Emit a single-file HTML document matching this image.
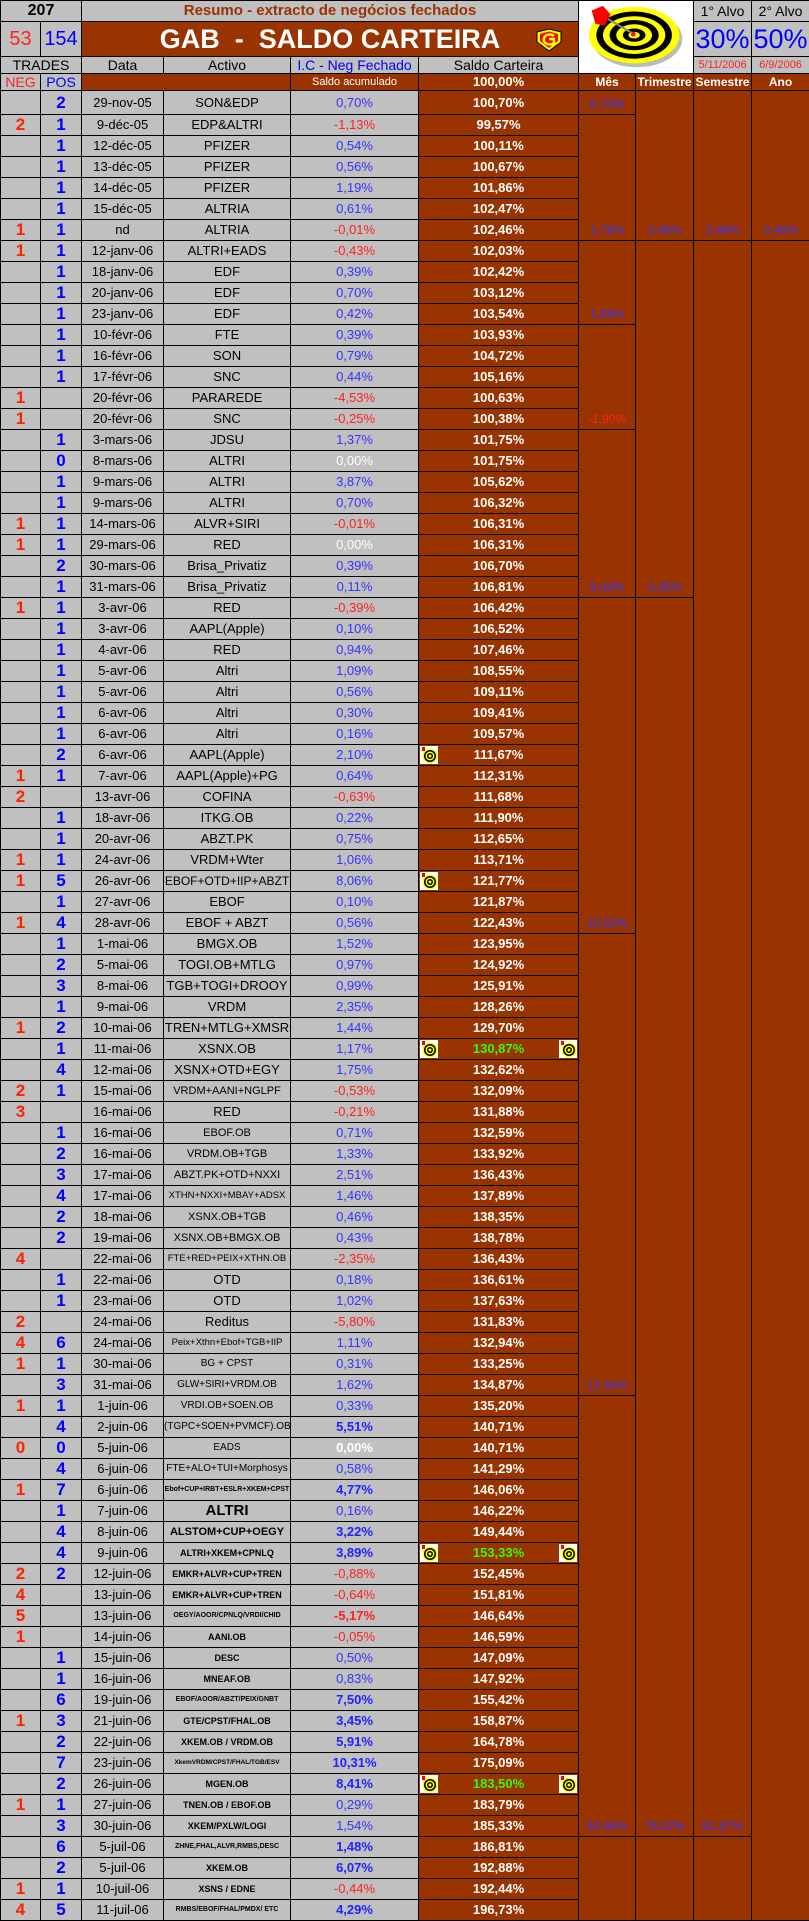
<!DOCTYPE html>
<html><head><meta charset="utf-8">
<style>
html,body{margin:0;padding:0;background:#c0c0c0;}
body{width:809px;height:1919px;overflow:hidden;}
table{border-collapse:collapse;table-layout:fixed;width:809px;font-family:"Liberation Sans",Arial,sans-serif;}
td{border:1px solid #000;padding:0;text-align:center;vertical-align:middle;font-size:13px;background:#c0c0c0;color:#000;white-space:nowrap;overflow:hidden;line-height:14px;}
tr.d td{height:20px;}
.n{color:#ff2200;font-weight:bold;font-size:17px;}
.p{color:#0000ff;font-weight:bold;font-size:17px;}
.ic{color:#3333ff;}
.r{color:#ff2020;}
.w{color:#fff;}
.b{font-weight:bold;color:#2222ff;}
.rb{font-weight:bold;color:#ff2020;}
.s{background:#993300;color:#fff;font-weight:bold;font-size:13px;position:relative;}
.g{color:#33ff00;}
.br{background:#993300;}
.m{background:#993300;color:#3333ff;vertical-align:bottom;padding-bottom:3px;font-size:12px;}
.mr{color:#ff2020;}
.a1{font-size:11px;}
.a2{font-size:9px;font-weight:bold;}
.a3{font-size:7px;font-weight:bold;}
.bd{font-size:15px;font-weight:bold;}
.bs{font-size:11px;font-weight:bold;}
.t{position:absolute;top:1px;width:18px;height:18px;}
.tl{left:1px}.tr{right:1px}
</style></head><body>
<svg width="0" height="0" style="position:absolute"><defs>
<g id="tg"><rect width="18" height="18" fill="#fff"/><circle cx="10" cy="10" r="7.5" fill="#ff0"/><circle cx="10" cy="10" r="6" fill="#000"/><circle cx="10" cy="10" r="4.5" fill="#ff0"/><circle cx="10" cy="10" r="3" fill="#000"/><circle cx="10" cy="10" r="1.5" fill="#ff0"/><rect x="2" y="1" width="3" height="4" fill="#f00"/></g>
</defs></svg>
<table>
<colgroup><col style="width:40px"><col style="width:41px"><col style="width:82px"><col style="width:127px"><col style="width:128px"><col style="width:160px"><col style="width:57px"><col style="width:58px"><col style="width:58px"><col style="width:58px"></colgroup>
<tr style="height:21px"><td colspan="2" style="height:20px;font-weight:bold;font-size:16px;">207</td><td colspan="4" style="color:#993300;font-weight:bold;font-size:15px;">Resumo - extracto de negócios fechados</td>
<td colspan="2" rowspan="3" style="background:#fff;padding:0;height:70px;"><svg style="display:block" width="115" height="68" viewBox="0 0 115 72"><ellipse cx="58" cy="38" rx="48" ry="30" fill="#bbb"/><ellipse cx="55" cy="34" rx="48" ry="30" fill="#ff0"/><ellipse cx="55" cy="34" rx="40" ry="25" fill="#000"/><ellipse cx="55" cy="34" rx="33" ry="20" fill="#ff0"/><ellipse cx="55" cy="34" rx="26" ry="16" fill="#000"/><ellipse cx="55" cy="34" rx="19" ry="11.5" fill="#ff0"/><ellipse cx="55" cy="34" rx="12" ry="7" fill="#000"/><ellipse cx="55" cy="34" rx="6" ry="3.5" fill="#ff0"/><circle cx="54" cy="33" r="2.5" fill="#f00"/><line x1="22" y1="14" x2="53" y2="32" stroke="#888" stroke-width="2"/><polygon points="10,8 22,3 30,12 24,24 14,22" fill="#f00"/></svg></td>
<td style="font-size:14px;">1° Alvo</td><td style="font-size:14px;">2° Alvo</td></tr>
<tr style="height:35px"><td style="height:34px;color:#ff2020;font-size:20px;">53</td><td style="color:#0000ff;font-size:20px;">154</td><td colspan="4" class="br" style="color:#fff;font-weight:bold;font-size:27px;position:relative;">GAB&nbsp; - &nbsp;SALDO CARTEIRA<svg style="position:absolute;left:452px;top:6px" width="30" height="24" viewBox="0 0 30 24"><polygon points="3,4 15,1 27,4 27,14 15,23 3,14" fill="#ff0" stroke="#000" stroke-width="1"/><polygon points="6,6 15,3.5 24,6 24,13 15,20 6,13" fill="#f00"/><path d="M20,8 A6,5 0 1 0 20,15 L20,11 L15,11" fill="none" stroke="#ff0" stroke-width="2.5"/></svg></td>
<td style="color:#0000ff;font-size:27px;">30%</td><td style="color:#0000ff;font-size:27px;">50%</td></tr>
<tr style="height:17px"><td colspan="2" style="height:16px;font-size:14px;">TRADES</td><td style="font-size:14px;">Data</td><td style="font-size:14px;">Activo</td><td style="font-size:14px;color:#0000ff;">I.C - Neg Fechado</td><td style="font-size:14px;">Saldo Carteira</td><td style="color:#ff2020;font-size:11px;">5/11/2006</td><td style="color:#ff2020;font-size:11px;">6/9/2006</td></tr>
<tr style="height:17px"><td style="height:16px;color:#ff2020;font-size:14px;">NEG</td><td style="color:#0000ff;font-size:14px;">POS</td><td colspan="2" class="br"></td><td class="br" style="color:#fff;font-size:11px;">Saldo acumulado</td><td class="s">100,00%</td><td class="s" style="font-size:12px">Mês</td><td class="s" style="font-size:12px">Trimestre</td><td class="s" style="font-size:12px">Semestre</td><td class="s" style="font-size:12px">Ano</td></tr>

<tr class="d"><td class="n"></td><td class="p">2</td><td>29-nov-05</td><td>SON&amp;EDP</td><td class="ic">0,70%</td><td class="s">100,70%</td><td class="m">0,70%</td><td class="m" rowspan="7">2,46%</td><td class="m" rowspan="7">2,46%</td><td class="m" rowspan="7">2,46%</td></tr>
<tr class="d"><td class="n">2</td><td class="p">1</td><td>9-déc-05</td><td>EDP&amp;ALTRI</td><td class="ic r">-1,13%</td><td class="s">99,57%</td><td class="m" rowspan="6">1,76%</td></tr>
<tr class="d"><td class="n"></td><td class="p">1</td><td>12-déc-05</td><td>PFIZER</td><td class="ic">0,54%</td><td class="s">100,11%</td></tr>
<tr class="d"><td class="n"></td><td class="p">1</td><td>13-déc-05</td><td>PFIZER</td><td class="ic">0,56%</td><td class="s">100,67%</td></tr>
<tr class="d"><td class="n"></td><td class="p">1</td><td>14-déc-05</td><td>PFIZER</td><td class="ic">1,19%</td><td class="s">101,86%</td></tr>
<tr class="d"><td class="n"></td><td class="p">1</td><td>15-déc-05</td><td>ALTRIA</td><td class="ic">0,61%</td><td class="s">102,47%</td></tr>
<tr class="d"><td class="n">1</td><td class="p">1</td><td>nd</td><td>ALTRIA</td><td class="ic r">-0,01%</td><td class="s">102,46%</td></tr>
<tr class="d"><td class="n">1</td><td class="p">1</td><td>12-janv-06</td><td>ALTRI+EADS</td><td class="ic r">-0,43%</td><td class="s">102,03%</td><td class="m" rowspan="4">1,08%</td><td class="m" rowspan="17">4,35%</td><td class="m" rowspan="76">82,87%</td><td class="m" rowspan="80"></td></tr>
<tr class="d"><td class="n"></td><td class="p">1</td><td>18-janv-06</td><td>EDF</td><td class="ic">0,39%</td><td class="s">102,42%</td></tr>
<tr class="d"><td class="n"></td><td class="p">1</td><td>20-janv-06</td><td>EDF</td><td class="ic">0,70%</td><td class="s">103,12%</td></tr>
<tr class="d"><td class="n"></td><td class="p">1</td><td>23-janv-06</td><td>EDF</td><td class="ic">0,42%</td><td class="s">103,54%</td></tr>
<tr class="d"><td class="n"></td><td class="p">1</td><td>10-févr-06</td><td>FTE</td><td class="ic">0,39%</td><td class="s">103,93%</td><td class="m mr" rowspan="5">-1,90%</td></tr>
<tr class="d"><td class="n"></td><td class="p">1</td><td>16-févr-06</td><td>SON</td><td class="ic">0,79%</td><td class="s">104,72%</td></tr>
<tr class="d"><td class="n"></td><td class="p">1</td><td>17-févr-06</td><td>SNC</td><td class="ic">0,44%</td><td class="s">105,16%</td></tr>
<tr class="d"><td class="n">1</td><td class="p"></td><td>20-févr-06</td><td>PARAREDE</td><td class="ic r">-4,53%</td><td class="s">100,63%</td></tr>
<tr class="d"><td class="n">1</td><td class="p"></td><td>20-févr-06</td><td>SNC</td><td class="ic r">-0,25%</td><td class="s">100,38%</td></tr>
<tr class="d"><td class="n"></td><td class="p">1</td><td>3-mars-06</td><td>JDSU</td><td class="ic">1,37%</td><td class="s">101,75%</td><td class="m" rowspan="8">6,43%</td></tr>
<tr class="d"><td class="n"></td><td class="p">0</td><td>8-mars-06</td><td>ALTRI</td><td class="ic w">0,00%</td><td class="s">101,75%</td></tr>
<tr class="d"><td class="n"></td><td class="p">1</td><td>9-mars-06</td><td>ALTRI</td><td class="ic">3,87%</td><td class="s">105,62%</td></tr>
<tr class="d"><td class="n"></td><td class="p">1</td><td>9-mars-06</td><td>ALTRI</td><td class="ic">0,70%</td><td class="s">106,32%</td></tr>
<tr class="d"><td class="n">1</td><td class="p">1</td><td>14-mars-06</td><td>ALVR+SIRI</td><td class="ic r">-0,01%</td><td class="s">106,31%</td></tr>
<tr class="d"><td class="n">1</td><td class="p">1</td><td>29-mars-06</td><td>RED</td><td class="ic w">0,00%</td><td class="s">106,31%</td></tr>
<tr class="d"><td class="n"></td><td class="p">2</td><td>30-mars-06</td><td>Brisa_Privatiz</td><td class="ic">0,39%</td><td class="s">106,70%</td></tr>
<tr class="d"><td class="n"></td><td class="p">1</td><td>31-mars-06</td><td>Brisa_Privatiz</td><td class="ic">0,11%</td><td class="s">106,81%</td></tr>
<tr class="d"><td class="n">1</td><td class="p">1</td><td>3-avr-06</td><td>RED</td><td class="ic r">-0,39%</td><td class="s">106,42%</td><td class="m" rowspan="16">15,62%</td><td class="m" rowspan="59">78,52%</td></tr>
<tr class="d"><td class="n"></td><td class="p">1</td><td>3-avr-06</td><td>AAPL(Apple)</td><td class="ic">0,10%</td><td class="s">106,52%</td></tr>
<tr class="d"><td class="n"></td><td class="p">1</td><td>4-avr-06</td><td>RED</td><td class="ic">0,94%</td><td class="s">107,46%</td></tr>
<tr class="d"><td class="n"></td><td class="p">1</td><td>5-avr-06</td><td>Altri</td><td class="ic">1,09%</td><td class="s">108,55%</td></tr>
<tr class="d"><td class="n"></td><td class="p">1</td><td>5-avr-06</td><td>Altri</td><td class="ic">0,56%</td><td class="s">109,11%</td></tr>
<tr class="d"><td class="n"></td><td class="p">1</td><td>6-avr-06</td><td>Altri</td><td class="ic">0,30%</td><td class="s">109,41%</td></tr>
<tr class="d"><td class="n"></td><td class="p">1</td><td>6-avr-06</td><td>Altri</td><td class="ic">0,16%</td><td class="s">109,57%</td></tr>
<tr class="d"><td class="n"></td><td class="p">2</td><td>6-avr-06</td><td>AAPL(Apple)</td><td class="ic">2,10%</td><td class="s"><svg class="t tl" viewBox="0 0 18 18"><use href="#tg"/></svg>111,67%</td></tr>
<tr class="d"><td class="n">1</td><td class="p">1</td><td>7-avr-06</td><td>AAPL(Apple)+PG</td><td class="ic">0,64%</td><td class="s">112,31%</td></tr>
<tr class="d"><td class="n">2</td><td class="p"></td><td>13-avr-06</td><td>COFINA</td><td class="ic r">-0,63%</td><td class="s">111,68%</td></tr>
<tr class="d"><td class="n"></td><td class="p">1</td><td>18-avr-06</td><td>ITKG.OB</td><td class="ic">0,22%</td><td class="s">111,90%</td></tr>
<tr class="d"><td class="n"></td><td class="p">1</td><td>20-avr-06</td><td>ABZT.PK</td><td class="ic">0,75%</td><td class="s">112,65%</td></tr>
<tr class="d"><td class="n">1</td><td class="p">1</td><td>24-avr-06</td><td>VRDM+Wter</td><td class="ic">1,06%</td><td class="s">113,71%</td></tr>
<tr class="d"><td class="n">1</td><td class="p">5</td><td>26-avr-06</td><td style="font-size:12px">EBOF+OTD+IIP+ABZT</td><td class="ic">8,06%</td><td class="s"><svg class="t tl" viewBox="0 0 18 18"><use href="#tg"/></svg>121,77%</td></tr>
<tr class="d"><td class="n"></td><td class="p">1</td><td>27-avr-06</td><td>EBOF</td><td class="ic">0,10%</td><td class="s">121,87%</td></tr>
<tr class="d"><td class="n">1</td><td class="p">4</td><td>28-avr-06</td><td>EBOF + ABZT</td><td class="ic">0,56%</td><td class="s">122,43%</td></tr>
<tr class="d"><td class="n"></td><td class="p">1</td><td>1-mai-06</td><td>BMGX.OB</td><td class="ic">1,52%</td><td class="s">123,95%</td><td class="m" rowspan="22">12,44%</td></tr>
<tr class="d"><td class="n"></td><td class="p">2</td><td>5-mai-06</td><td>TOGI.OB+MTLG</td><td class="ic">0,97%</td><td class="s">124,92%</td></tr>
<tr class="d"><td class="n"></td><td class="p">3</td><td>8-mai-06</td><td>TGB+TOGI+DROOY</td><td class="ic">0,99%</td><td class="s">125,91%</td></tr>
<tr class="d"><td class="n"></td><td class="p">1</td><td>9-mai-06</td><td>VRDM</td><td class="ic">2,35%</td><td class="s">128,26%</td></tr>
<tr class="d"><td class="n">1</td><td class="p">2</td><td>10-mai-06</td><td>TREN+MTLG+XMSR</td><td class="ic">1,44%</td><td class="s">129,70%</td></tr>
<tr class="d"><td class="n"></td><td class="p">1</td><td>11-mai-06</td><td>XSNX.OB</td><td class="ic">1,17%</td><td class="s g"><svg class="t tl" viewBox="0 0 18 18"><use href="#tg"/></svg>130,87%<svg class="t tr" viewBox="0 0 18 18"><use href="#tg"/></svg></td></tr>
<tr class="d"><td class="n"></td><td class="p">4</td><td>12-mai-06</td><td>XSNX+OTD+EGY</td><td class="ic">1,75%</td><td class="s">132,62%</td></tr>
<tr class="d"><td class="n">2</td><td class="p">1</td><td>15-mai-06</td><td class="a1">VRDM+AANI+NGLPF</td><td class="ic r">-0,53%</td><td class="s">132,09%</td></tr>
<tr class="d"><td class="n">3</td><td class="p"></td><td>16-mai-06</td><td>RED</td><td class="ic r">-0,21%</td><td class="s">131,88%</td></tr>
<tr class="d"><td class="n"></td><td class="p">1</td><td>16-mai-06</td><td class="a1">EBOF.OB</td><td class="ic">0,71%</td><td class="s">132,59%</td></tr>
<tr class="d"><td class="n"></td><td class="p">2</td><td>16-mai-06</td><td class="a1">VRDM.OB+TGB</td><td class="ic">1,33%</td><td class="s">133,92%</td></tr>
<tr class="d"><td class="n"></td><td class="p">3</td><td>17-mai-06</td><td class="a1">ABZT.PK+OTD+NXXI</td><td class="ic">2,51%</td><td class="s">136,43%</td></tr>
<tr class="d"><td class="n"></td><td class="p">4</td><td>17-mai-06</td><td style="font-size:9.5px">XTHN+NXXI+MBAY+ADSX</td><td class="ic">1,46%</td><td class="s">137,89%</td></tr>
<tr class="d"><td class="n"></td><td class="p">2</td><td>18-mai-06</td><td class="a1">XSNX.OB+TGB</td><td class="ic">0,46%</td><td class="s">138,35%</td></tr>
<tr class="d"><td class="n"></td><td class="p">2</td><td>19-mai-06</td><td class="a1">XSNX.OB+BMGX.OB</td><td class="ic">0,43%</td><td class="s">138,78%</td></tr>
<tr class="d"><td class="n">4</td><td class="p"></td><td>22-mai-06</td><td style="font-size:9.5px">FTE+RED+PEIX+XTHN.OB</td><td class="ic r">-2,35%</td><td class="s">136,43%</td></tr>
<tr class="d"><td class="n"></td><td class="p">1</td><td>22-mai-06</td><td>OTD</td><td class="ic">0,18%</td><td class="s">136,61%</td></tr>
<tr class="d"><td class="n"></td><td class="p">1</td><td>23-mai-06</td><td>OTD</td><td class="ic">1,02%</td><td class="s">137,63%</td></tr>
<tr class="d"><td class="n">2</td><td class="p"></td><td>24-mai-06</td><td>Reditus</td><td class="ic r">-5,80%</td><td class="s">131,83%</td></tr>
<tr class="d"><td class="n">4</td><td class="p">6</td><td>24-mai-06</td><td style="font-size:9.5px">Peix+Xthn+Ebof+TGB+IIP</td><td class="ic">1,11%</td><td class="s">132,94%</td></tr>
<tr class="d"><td class="n">1</td><td class="p">1</td><td>30-mai-06</td><td style="font-size:10px">BG + CPST</td><td class="ic">0,31%</td><td class="s">133,25%</td></tr>
<tr class="d"><td class="n"></td><td class="p">3</td><td>31-mai-06</td><td style="font-size:10px">GLW+SIRI+VRDM.OB</td><td class="ic">1,62%</td><td class="s">134,87%</td></tr>
<tr class="d"><td class="n">1</td><td class="p">1</td><td>1-juin-06</td><td style="font-size:10px">VRDI.OB+SOEN.OB</td><td class="ic">0,33%</td><td class="s">135,20%</td><td class="m" rowspan="21">50,46%</td></tr>
<tr class="d"><td class="n"></td><td class="p">4</td><td>2-juin-06</td><td style="font-size:10px">(TGPC+SOEN+PVMCF).OB</td><td class="b">5,51%</td><td class="s">140,71%</td></tr>
<tr class="d"><td class="n">0</td><td class="p">0</td><td>5-juin-06</td><td style="font-size:10px">EADS</td><td style="color:#fff;font-weight:bold">0,00%</td><td class="s">140,71%</td></tr>
<tr class="d"><td class="n"></td><td class="p">4</td><td>6-juin-06</td><td style="font-size:10px">FTE+ALO+TUI+Morphosys</td><td class="ic">0,58%</td><td class="s">141,29%</td></tr>
<tr class="d"><td class="n">1</td><td class="p">7</td><td>6-juin-06</td><td class="a3">Ebof+CUP+IRBT+ESLR+XKEM+CPST</td><td class="b">4,77%</td><td class="s">146,06%</td></tr>
<tr class="d"><td class="n"></td><td class="p">1</td><td>7-juin-06</td><td class="bd">ALTRI</td><td class="ic">0,16%</td><td class="s">146,22%</td></tr>
<tr class="d"><td class="n"></td><td class="p">4</td><td>8-juin-06</td><td class="bs">ALSTOM+CUP+OEGY</td><td class="b">3,22%</td><td class="s">149,44%</td></tr>
<tr class="d"><td class="n"></td><td class="p">4</td><td>9-juin-06</td><td class="a2">ALTRI+XKEM+CPNLQ</td><td class="b">3,89%</td><td class="s g"><svg class="t tl" viewBox="0 0 18 18"><use href="#tg"/></svg>153,33%<svg class="t tr" viewBox="0 0 18 18"><use href="#tg"/></svg></td></tr>
<tr class="d"><td class="n">2</td><td class="p">2</td><td>12-juin-06</td><td class="a2">EMKR+ALVR+CUP+TREN</td><td class="ic r">-0,88%</td><td class="s">152,45%</td></tr>
<tr class="d"><td class="n">4</td><td class="p"></td><td>13-juin-06</td><td class="a2">EMKR+ALVR+CUP+TREN</td><td class="ic r">-0,64%</td><td class="s">151,81%</td></tr>
<tr class="d"><td class="n">5</td><td class="p"></td><td>13-juin-06</td><td class="a3">OEGY/AOOR/CPNLQ/VRDI/CHID</td><td class="rb">-5,17%</td><td class="s">146,64%</td></tr>
<tr class="d"><td class="n">1</td><td class="p"></td><td>14-juin-06</td><td class="a2">AANI.OB</td><td class="ic r">-0,05%</td><td class="s">146,59%</td></tr>
<tr class="d"><td class="n"></td><td class="p">1</td><td>15-juin-06</td><td class="a2">DESC</td><td class="ic">0,50%</td><td class="s">147,09%</td></tr>
<tr class="d"><td class="n"></td><td class="p">1</td><td>16-juin-06</td><td class="a2">MNEAF.OB</td><td class="ic">0,83%</td><td class="s">147,92%</td></tr>
<tr class="d"><td class="n"></td><td class="p">6</td><td>19-juin-06</td><td class="a3">EBOF/AOOR/ABZT/PEIX/GNBT</td><td class="b">7,50%</td><td class="s">155,42%</td></tr>
<tr class="d"><td class="n">1</td><td class="p">3</td><td>21-juin-06</td><td class="a2">GTE/CPST/FHAL.OB</td><td class="b">3,45%</td><td class="s">158,87%</td></tr>
<tr class="d"><td class="n"></td><td class="p">2</td><td>22-juin-06</td><td class="a2">XKEM.OB / VRDM.OB</td><td class="b">5,91%</td><td class="s">164,78%</td></tr>
<tr class="d"><td class="n"></td><td class="p">7</td><td>23-juin-06</td><td class="a3" style="font-size:6.5px">XkemVRDM/CPST/FHAL/TGB/ESV</td><td class="b">10,31%</td><td class="s">175,09%</td></tr>
<tr class="d"><td class="n"></td><td class="p">2</td><td>26-juin-06</td><td class="a2">MGEN.OB</td><td class="b">8,41%</td><td class="s g"><svg class="t tl" viewBox="0 0 18 18"><use href="#tg"/></svg>183,50%<svg class="t tr" viewBox="0 0 18 18"><use href="#tg"/></svg></td></tr>
<tr class="d"><td class="n">1</td><td class="p">1</td><td>27-juin-06</td><td class="a2">TNEN.OB / EBOF.OB</td><td class="ic">0,29%</td><td class="s">183,79%</td></tr>
<tr class="d"><td class="n"></td><td class="p">3</td><td>30-juin-06</td><td class="a2">XKEM/PXLW/LOGI</td><td class="ic">1,54%</td><td class="s">185,33%</td></tr>
<tr class="d"><td class="n"></td><td class="p">6</td><td>5-juil-06</td><td class="a3">ZHNE,FHAL,ALVR,RMBS,DESC</td><td class="b">1,48%</td><td class="s">186,81%</td><td class="m" rowspan="4"></td><td class="m" rowspan="4"></td><td class="m" rowspan="4"></td></tr>
<tr class="d"><td class="n"></td><td class="p">2</td><td>5-juil-06</td><td class="a2">XKEM.OB</td><td class="b">6,07%</td><td class="s">192,88%</td></tr>
<tr class="d"><td class="n">1</td><td class="p">1</td><td>10-juil-06</td><td class="a2">XSNS / EDNE</td><td class="ic r">-0,44%</td><td class="s">192,44%</td></tr>
<tr class="d"><td class="n">4</td><td class="p">5</td><td>11-juil-06</td><td class="a3">RMBS/EBOF/FHAL/PMDX/ ETC</td><td class="b">4,29%</td><td class="s">196,73%</td></tr>
</table>
</body></html>
